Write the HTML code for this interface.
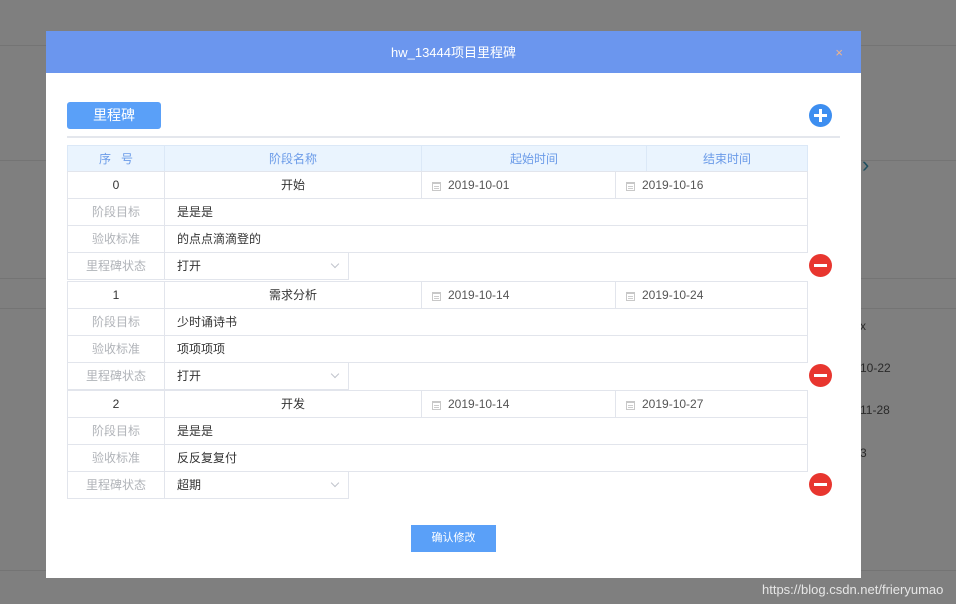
<!DOCTYPE html>
<html><head><meta charset="utf-8"><style>
*{margin:0;padding:0;box-sizing:border-box}
body{width:956px;height:604px;background:#7f7f7f;position:relative;overflow:hidden;font-family:"Liberation Sans","Noto Sans CJK SC",sans-serif;font-size:12px;color:#333}
.a{position:absolute}
.ln{position:absolute;left:0;width:956px;height:1px;background:#747474}
.dlg{position:absolute;left:46px;top:31px;width:815px;height:547px;background:#fff}
.hd{position:absolute;left:0;top:0;width:815px;height:42px;background:#6b96ee;color:#fff;font-size:13px;text-align:center;line-height:44px}
.c{position:absolute;border:1px solid #e2e5ec;height:28px;line-height:26px;font-size:12px;background:#fff}
.th{background:#eaf4fe;color:#6b9be8;text-align:center;border-color:#dbe8f7}
.lb{color:#b0b3b8;text-align:center}
.ce{text-align:center}
.tx{padding-left:12px}
.dt{padding-left:26px;color:#555}
.cal{position:absolute;left:10px;top:10px;width:9px;height:9px;border:1px solid #c8c8c8;border-top-width:2px}
.cal:after{content:"";position:absolute;left:1px;right:1px;top:2px;height:1px;background:#ccc;box-shadow:0 2px 0 #ccc}
.arr{position:absolute;right:10px;top:8px;width:6px;height:6px;border-right:1px solid #c0c4cc;border-bottom:1px solid #c0c4cc;transform:rotate(45deg)}
.minus{position:absolute;width:23px;height:23px;border-radius:50%;background:#e8362f}
.minus:after{content:"";position:absolute;left:5px;top:10px;width:13px;height:3px;background:#fff}
</style></head><body>
<div class="ln" style="top:45px"></div>
<div class="ln" style="top:160px"></div>
<div class="ln" style="top:278px"></div>
<div class="ln" style="top:308px"></div>
<div class="ln" style="top:570px"></div>
<div class="a" style="left:862px;top:152px;font-size:22px;color:#1f4f5f">›</div>
<div class="a" style="left:860px;top:319px;color:#2a2a2a">x</div>
<div class="a" style="left:860px;top:361px;color:#2a2a2a">10-22</div>
<div class="a" style="left:860px;top:403px;color:#2a2a2a">11-28</div>
<div class="a" style="left:860px;top:446px;color:#2a2a2a">3</div>
<div class="a" style="left:762px;top:582px;color:#e6e6e6;font-size:13px">https://blog.csdn.net/frieryumao</div>

<div class="dlg">
<div class="hd">hw_13444项目里程碑<span class="a" style="right:18px;top:0;color:#f0b48a;font-size:13px">×</span></div>
</div>
<div class="a" style="left:67px;top:102px;width:94px;height:27px;background:#5aa0f8;border-radius:3px;color:#fff;font-size:14px;text-align:center;line-height:27px">里程碑</div>
<div class="a" style="left:809px;top:104px;width:23px;height:23px;border-radius:50%;background:#3d8ef0"><div class="a" style="left:5px;top:10px;width:13px;height:3px;background:#fff"></div><div class="a" style="left:10px;top:5px;width:3px;height:13px;background:#fff"></div></div>
<div class="a" style="left:67px;top:136px;width:773px;height:2px;background:#e4e7ed"></div>

<div class="c th" style="left:67px;top:145px;width:98px;height:27px">序&nbsp;&nbsp;&nbsp;号</div>
<div class="c th" style="left:164px;top:145px;width:258px;height:27px">阶段名称</div>
<div class="c th" style="left:421px;top:145px;width:226px;height:27px">起始时间</div>
<div class="c th" style="left:646px;top:145px;width:162px;height:27px">结束时间</div>

<div class="c ce" style="left:67px;top:171px;width:98px">0</div>
<div class="c ce" style="left:164px;top:171px;width:258px">开始</div>
<div class="c dt" style="left:421px;top:171px;width:195px"><i class="cal"></i>2019-10-01</div>
<div class="c dt" style="left:615px;top:171px;width:193px"><i class="cal"></i>2019-10-16</div>
<div class="c lb" style="left:67px;top:198px;width:98px">阶段目标</div>
<div class="c tx" style="left:164px;top:198px;width:644px">是是是</div>
<div class="c lb" style="left:67px;top:225px;width:98px">验收标准</div>
<div class="c tx" style="left:164px;top:225px;width:644px">的点点滴滴登的</div>
<div class="c lb" style="left:67px;top:252px;width:98px">里程碑状态</div>
<div class="c tx" style="left:164px;top:252px;width:185px">打开<i class="arr"></i></div>
<div class="minus" style="left:809px;top:254px"></div>

<div class="c ce" style="left:67px;top:281px;width:98px">1</div>
<div class="c ce" style="left:164px;top:281px;width:258px">需求分析</div>
<div class="c dt" style="left:421px;top:281px;width:195px"><i class="cal"></i>2019-10-14</div>
<div class="c dt" style="left:615px;top:281px;width:193px"><i class="cal"></i>2019-10-24</div>
<div class="c lb" style="left:67px;top:308px;width:98px">阶段目标</div>
<div class="c tx" style="left:164px;top:308px;width:644px">少时诵诗书</div>
<div class="c lb" style="left:67px;top:335px;width:98px">验收标准</div>
<div class="c tx" style="left:164px;top:335px;width:644px">项项项项</div>
<div class="c lb" style="left:67px;top:362px;width:98px">里程碑状态</div>
<div class="c tx" style="left:164px;top:362px;width:185px">打开<i class="arr"></i></div>
<div class="minus" style="left:809px;top:364px"></div>

<div class="c ce" style="left:67px;top:390px;width:98px">2</div>
<div class="c ce" style="left:164px;top:390px;width:258px">开发</div>
<div class="c dt" style="left:421px;top:390px;width:195px"><i class="cal"></i>2019-10-14</div>
<div class="c dt" style="left:615px;top:390px;width:193px"><i class="cal"></i>2019-10-27</div>
<div class="c lb" style="left:67px;top:417px;width:98px">阶段目标</div>
<div class="c tx" style="left:164px;top:417px;width:644px">是是是</div>
<div class="c lb" style="left:67px;top:444px;width:98px">验收标准</div>
<div class="c tx" style="left:164px;top:444px;width:644px">反反复复付</div>
<div class="c lb" style="left:67px;top:471px;width:98px">里程碑状态</div>
<div class="c tx" style="left:164px;top:471px;width:185px">超期<i class="arr"></i></div>
<div class="minus" style="left:809px;top:473px"></div>

<div class="a" style="left:411px;top:525px;width:85px;height:27px;background:#5aa0f8;color:#fff;font-size:11px;text-align:center;line-height:27px">确认修改</div>
</body></html>
